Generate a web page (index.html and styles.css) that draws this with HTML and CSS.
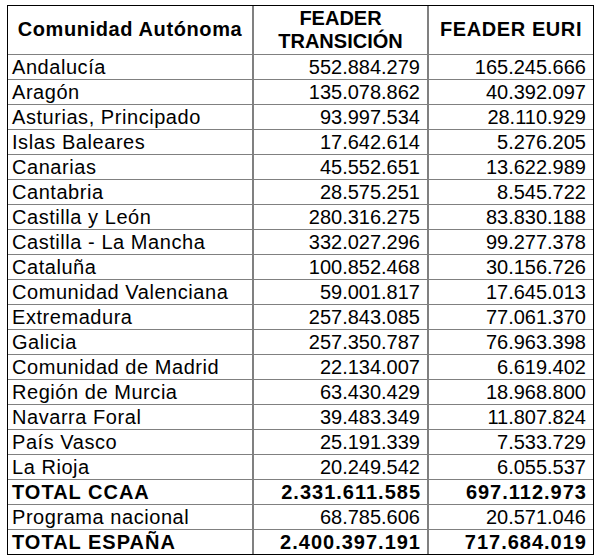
FILE: index.html
```html
<!DOCTYPE html>
<html lang="es">
<head>
<meta charset="utf-8">
<title>FEADER por Comunidad Autónoma</title>
<link rel="stylesheet" href="styles.css">
</head>
<body>
<table class="sheet">
  <thead>
    <tr>
      <th class="c1">Comunidad Autónoma</th>
      <th class="c2">FEADER<br>TRANSICIÓN</th>
      <th class="c3">FEADER EURI</th>
    </tr>
  </thead>
  <tbody>
    <tr><td>Andalucía</td><td class="num">552.884.279</td><td class="num">165.245.666</td></tr>
    <tr><td>Aragón</td><td class="num">135.078.862</td><td class="num">40.392.097</td></tr>
    <tr><td>Asturias, Principado</td><td class="num">93.997.534</td><td class="num">28.110.929</td></tr>
    <tr><td>Islas Baleares</td><td class="num">17.642.614</td><td class="num">5.276.205</td></tr>
    <tr><td>Canarias</td><td class="num">45.552.651</td><td class="num">13.622.989</td></tr>
    <tr><td>Cantabria</td><td class="num">28.575.251</td><td class="num">8.545.722</td></tr>
    <tr><td>Castilla y León</td><td class="num">280.316.275</td><td class="num">83.830.188</td></tr>
    <tr><td>Castilla - La Mancha</td><td class="num">332.027.296</td><td class="num">99.277.378</td></tr>
    <tr><td>Cataluña</td><td class="num">100.852.468</td><td class="num">30.156.726</td></tr>
    <tr><td>Comunidad Valenciana</td><td class="num">59.001.817</td><td class="num">17.645.013</td></tr>
    <tr><td>Extremadura</td><td class="num">257.843.085</td><td class="num">77.061.370</td></tr>
    <tr><td>Galicia</td><td class="num">257.350.787</td><td class="num">76.963.398</td></tr>
    <tr><td>Comunidad de Madrid</td><td class="num">22.134.007</td><td class="num">6.619.402</td></tr>
    <tr><td>Región de Murcia</td><td class="num">63.430.429</td><td class="num">18.968.800</td></tr>
    <tr><td>Navarra Foral</td><td class="num">39.483.349</td><td class="num">11.807.824</td></tr>
    <tr><td>País Vasco</td><td class="num">25.191.339</td><td class="num">7.533.729</td></tr>
    <tr><td>La Rioja</td><td class="num">20.249.542</td><td class="num">6.055.537</td></tr>
    <tr class="total"><td>TOTAL CCAA</td><td class="num">2.331.611.585</td><td class="num">697.112.973</td></tr>
    <tr><td>Programa nacional</td><td class="num">68.785.606</td><td class="num">20.571.046</td></tr>
    <tr class="total last"><td>TOTAL ESPAÑA</td><td class="num">2.400.397.191</td><td class="num">717.684.019</td></tr>
  </tbody>
</table>
</body>
</html>
```

FILE: styles.css
```css
html, body {
  margin: 0;
  padding: 0;
  background: #ffffff;
}

body {
  padding: 5px 0 0 7px;
  font-family: "Liberation Sans", Arial, sans-serif;
  color: #000000;
}

.sheet {
  border-collapse: separate;
  border-spacing: 0;
  border: 1px solid #000000;
  table-layout: fixed;
  width: 587px;
  font-size: 20px;
}

.sheet th,
.sheet td {
  box-sizing: border-box;
  border-right: 2px solid #808080;
  border-bottom: 1px solid #808080;
  padding: 0 6px 0 4px;
  white-space: nowrap;
  overflow: hidden;
}

.sheet th:last-child,
.sheet td:last-child {
  border-right: none;
}

.sheet th {
  height: 49px;
  font-weight: bold;
  text-align: center;
  vertical-align: middle;
  line-height: 23px;
  padding: 0 2px 1px;
}

.sheet .c1 {
  width: 246px;
  letter-spacing: 0.6px;
}
.sheet .c2 { width: 175px; }
.sheet .c3 {
  width: 164px;
  letter-spacing: 0.6px;
}

.sheet td {
  height: 25px;
  line-height: 24px;
  text-align: left;
  vertical-align: middle;
}

.sheet td:first-child {
  letter-spacing: 0.55px;
}

.sheet td.num {
  text-align: right;
  padding-right: 7px;
}

.sheet tr.total td {
  font-weight: bold;
  letter-spacing: 1px;
}

.sheet tr.total td.num {
  padding-right: 6px;
}

.sheet tr.last td {
  border-bottom: none;
  height: 24px;
}
```
